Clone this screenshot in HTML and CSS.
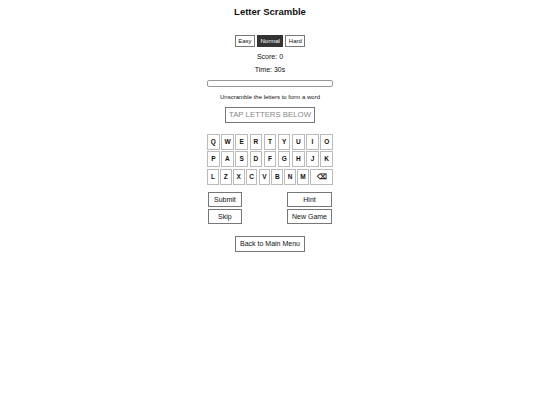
FILE: index.html
```html
<!DOCTYPE html>
<html>
<head>
<meta charset="utf-8">
<link rel="stylesheet" href="styles.css">
</head>
<body>
<div class="app">
  <h1 class="title">Letter Scramble</h1>
  <div class="difficulty">
    <button class="diff">Easy</button>
    <button class="diff active">Normal</button>
    <button class="diff">Hard</button>
  </div>
  <div class="stat score">Score: 0</div>
  <div class="stat time">Time: 30s</div>
  <div class="progress"><div class="fill"></div></div>
  <div class="instructions">Unscramble the letters to form a word</div>
  <div class="answer">TAP LETTERS BELOW</div>
  <div class="keyboard">
    <div class="row">
      <button class="key">Q</button><button class="key">W</button><button class="key">E</button><button class="key">R</button><button class="key">T</button><button class="key">Y</button><button class="key">U</button><button class="key">I</button><button class="key">O</button>
    </div>
    <div class="row">
      <button class="key">P</button><button class="key">A</button><button class="key">S</button><button class="key">D</button><button class="key">F</button><button class="key">G</button><button class="key">H</button><button class="key">J</button><button class="key">K</button>
    </div>
    <div class="row row3">
      <button class="key">L</button><button class="key">Z</button><button class="key">X</button><button class="key">C</button><button class="key">V</button><button class="key">B</button><button class="key">N</button><button class="key">M</button><button class="key back">⌫</button>
    </div>
  </div>
  <div class="actions">
    <button class="btn">Submit</button>
    <button class="btn">Hint</button>
    <button class="btn">Skip</button>
    <button class="btn">New Game</button>
  </div>
  <button class="btn menu">Back to Main Menu</button>
</div>
</body>
</html>
```
FILE: styles.css
```css
html, body {
  margin: 0;
  padding: 0;
  background: #fff;
}
body {
  font-family: "Liberation Sans", Arial, sans-serif;
  color: #111;
}
.app {
  display: flex;
  flex-direction: column;
  align-items: center;
  width: 540px;
}
.title {
  margin: 7px 0 0;
  font-size: 9.5px;
  line-height: 10px;
  font-weight: bold;
}
button {
  font-family: "Liberation Sans", Arial, sans-serif;
  background: #fff;
  color: #111;
  margin: 0;
  cursor: pointer;
}
.difficulty {
  margin-top: 18px;
  display: flex;
  gap: 2px;
}
.diff {
  height: 12px;
  padding: 0 2.5px;
  font-size: 6px;
  line-height: 10px;
  border: 1px solid #777;
}
.diff.active {
  background: #333;
  color: #fff;
  border-color: #333;
}
.stat {
  font-size: 7px;
  line-height: 9px;
}
.score { margin-top: 4.5px; }
.time { margin-top: 4.5px; }
.progress {
  margin-top: 5.5px;
  width: 124px;
  height: 5px;
  border: 1px solid #999;
  border-radius: 2px;
}
.fill {
  width: 0;
  height: 100%;
}
.instructions {
  margin-top: 6px;
  font-size: 6px;
  line-height: 8px;
}
.answer {
  margin-top: 6px;
  box-sizing: border-box;
  width: 90px;
  height: 16px;
  border: 1px solid #777;
  color: #888;
  font-size: 7.8px;
  line-height: 14px;
  text-align: center;
}
.keyboard {
  margin-top: 11px;
  width: 126px;
  display: flex;
  flex-direction: column;
  gap: 1.5px;
}
.row {
  display: flex;
  justify-content: space-between;
}
.key {
  box-sizing: border-box;
  width: 12.6px;
  height: 16px;
  padding: 0;
  border: 1px solid #bbb;
  font-size: 6.5px;
  font-weight: bold;
  line-height: 14px;
  text-align: center;
}
.row3 .key {
  width: 11.8px;
}
.row3 .key.back {
  width: 23px;
  font-size: 7px;
}
.actions {
  margin-top: 7px;
  width: 124px;
  display: grid;
  grid-template-columns: auto auto;
  justify-content: space-between;
  row-gap: 2px;
}
.btn {
  box-sizing: border-box;
  height: 15px;
  padding: 0 5px;
  border: 1px solid #777;
  font-size: 7px;
  line-height: 13px;
}
.actions .btn:nth-child(even) {
  padding: 0 4px;
}
.menu {
  margin-top: 12px;
  height: 16px;
  padding: 0 4px;
}
```
